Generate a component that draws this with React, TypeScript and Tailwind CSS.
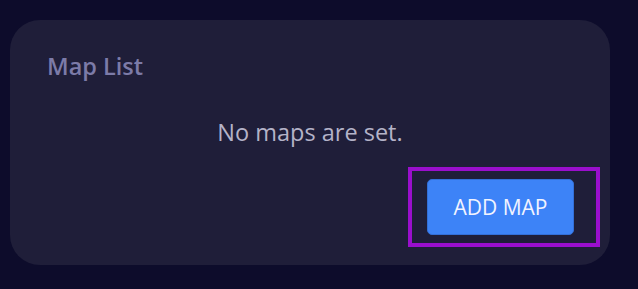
export default function App() {
  return (
    <div className="min-h-screen w-full bg-[#0d0c2b] pt-5 pl-[10px] font-['Open_Sans',sans-serif]">
      <div className="w-[600px] h-[245px] rounded-[30px] bg-[#1f1e39] flex flex-col">
        <h2 className="pl-[37px] pt-[30px] text-[23.5px] leading-[32px] font-semibold text-[#7c7ba8]">Map List</h2>
        <p className="mt-[34px] text-center text-[23.5px] leading-[32px] text-[#b4b3c8]">No maps are set.</p>
        <div className="flex justify-end pr-[10px] mt-[19px]">
          <div className="border-4 border-[#9a0fcd] pl-[15px] pr-[22px] py-[8px]">
            <button className="w-[147px] h-[56px] rounded-[5px] bg-[#3d83f7] border border-[#336fd8] text-[21px] leading-[28px] text-[#f1f3ff]">
              ADD MAP
            </button>
          </div>
        </div>
      </div>
    </div>
  );
}
